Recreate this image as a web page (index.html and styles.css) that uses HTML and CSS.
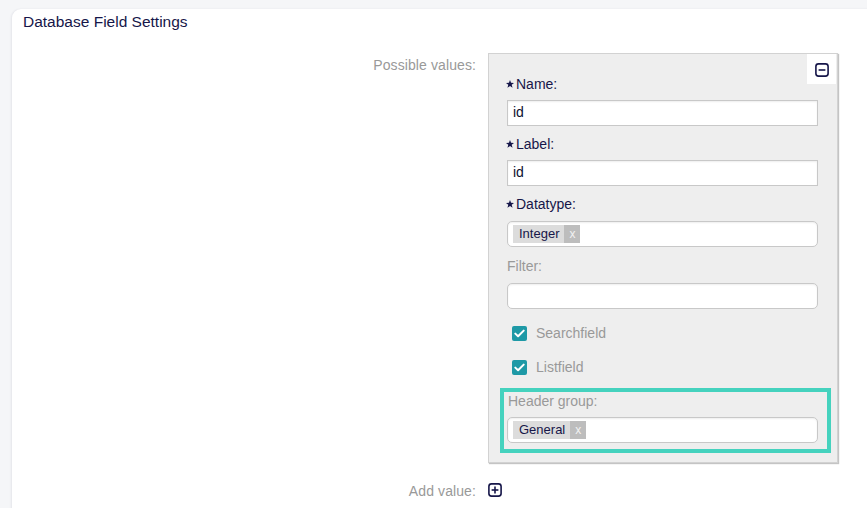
FILE: index.html
```html
<!DOCTYPE html>
<html lang="en">
<head>
<meta charset="utf-8">
<title>Database Field Settings</title>
<link rel="stylesheet" href="styles.css">
</head>
<body>
<div class="card">
  <h1 class="title">Database Field Settings</h1>
  <div class="row">
    <div class="row-label">Possible values:</div>
    <div class="row-value">
      <div class="value-box">
        <button class="collapse" type="button" aria-label="Collapse">
          <svg width="14" height="14" viewBox="0 0 14 14"><rect x="0.9" y="0.9" width="12.2" height="12.2" rx="2.6" fill="none" stroke="#161649" stroke-width="1.6"/><line x1="3.6" y1="7" x2="10.4" y2="7" stroke="#161649" stroke-width="1.6"/></svg>
        </button>
        <div class="field">
          <div class="field-label required"><svg class="star" width="8" height="8" viewBox="0 0 10 10"><polygon points="5,0 6.3,3.5 10,3.6 7.1,5.9 8.2,9.7 5,7.5 1.8,9.7 2.9,5.9 0,3.6 3.7,3.5" fill="#161649"/></svg>Name:</div>
          <div class="input">id</div>
        </div>
        <div class="field">
          <div class="field-label required"><svg class="star" width="8" height="8" viewBox="0 0 10 10"><polygon points="5,0 6.3,3.5 10,3.6 7.1,5.9 8.2,9.7 5,7.5 1.8,9.7 2.9,5.9 0,3.6 3.7,3.5" fill="#161649"/></svg>Label:</div>
          <div class="input">id</div>
        </div>
        <div class="field field-select">
          <div class="field-label required"><svg class="star" width="8" height="8" viewBox="0 0 10 10"><polygon points="5,0 6.3,3.5 10,3.6 7.1,5.9 8.2,9.7 5,7.5 1.8,9.7 2.9,5.9 0,3.6 3.7,3.5" fill="#161649"/></svg>Datatype:</div>
          <div class="input rounded"><span class="tag"><span class="tag-text">Integer</span><span class="tag-x">x</span></span></div>
        </div>
        <div class="field field-select">
          <div class="field-label muted">Filter:</div>
          <div class="input rounded"></div>
        </div>
        <div class="check-row">
          <span class="checkbox"><svg width="11" height="9" viewBox="0 0 11 9"><path d="M1.3 4.6 L4.1 7.3 L9.7 1.6" fill="none" stroke="#fff" stroke-width="2" stroke-linecap="round" stroke-linejoin="round"/></svg></span>
          <span class="check-label">Searchfield</span>
        </div>
        <div class="check-row">
          <span class="checkbox"><svg width="11" height="9" viewBox="0 0 11 9"><path d="M1.3 4.6 L4.1 7.3 L9.7 1.6" fill="none" stroke="#fff" stroke-width="2" stroke-linecap="round" stroke-linejoin="round"/></svg></span>
          <span class="check-label">Listfield</span>
        </div>
        <div class="highlight">
          <div class="field-label muted">Header group:</div>
          <div class="input rounded"><span class="tag"><span class="tag-text">General</span><span class="tag-x">x</span></span></div>
        </div>
      </div>
    </div>
  </div>
  <div class="row add-row">
    <div class="row-label">Add value:</div>
    <div class="row-value">
      <button class="add" type="button" aria-label="Add value">
        <svg width="14" height="14" viewBox="0 0 14 14"><rect x="0.9" y="0.9" width="12.2" height="12.2" rx="2.6" fill="none" stroke="#161649" stroke-width="1.6"/><line x1="3.6" y1="7" x2="10.4" y2="7" stroke="#161649" stroke-width="1.6"/><line x1="7" y1="3.6" x2="7" y2="10.4" stroke="#161649" stroke-width="1.6"/></svg>
      </button>
    </div>
  </div>
</div>
</body>
</html>
```

FILE: styles.css
```css
html, body {
  margin: 0;
  padding: 0;
  overflow: hidden;
}
body {
  background: #f5f6f8;
  font-family: "Liberation Sans", Arial, sans-serif;
  font-size: 14px;
  color: #161649;
  width: 867px;
  height: 508px;
}
.card {
  margin: 9px -20px 0 12px;
  background: #fff;
  border-radius: 9px 9px 0 0;
  box-shadow: -1px 0 2px rgba(40, 40, 80, 0.08);
  min-height: 600px;
  padding-top: 3px;
}
.title {
  margin: 0;
  padding: 0 11px;
  font-size: 15.5px;
  font-weight: normal;
  line-height: 20px;
  color: #161649;
}
.row {
  display: grid;
  grid-template-columns: 464px 350px;
  column-gap: 12px;
  margin-top: 21px;
}
.row-label {
  text-align: right;
  color: #999;
  line-height: 20px;
  padding-top: 2px;
  letter-spacing: 0.1px;
}
.value-box {
  position: relative;
  background: #eeeeee;
  border: 1px solid #d2d2d2;
  box-shadow: 1px 1px 1px #c4c4c4;
  padding: 20px 19px 9px 18px;
}
.collapse {
  position: absolute;
  top: 0;
  right: 1px;
  width: 29px;
  height: 30px;
  background: #fff;
  border: 0;
  padding: 0;
  display: flex;
  align-items: center;
  justify-content: center;
}
.collapse svg {
  margin-top: 1px;
}
.field-label {
  display: flex;
  align-items: center;
  line-height: 20px;
  height: 20px;
  margin-bottom: 6px;
}
.field-label .star {
  margin: 0 2px 0 -1px;
}
.field-label.muted {
  color: #999;
}
.input {
  box-sizing: border-box;
  height: 26px;
  background: #fff;
  border: 1px solid #c8c8c8;
  box-shadow: inset 0 1px 2px rgba(0, 0, 0, 0.07);
  padding: 0 5px 2px;
  line-height: 22px;
  color: #0d1030;
  display: flex;
  align-items: center;
}
.field {
  margin-bottom: 8px;
}
.field-select .field-label {
  margin-bottom: 7px;
}
.field-select {
  margin-bottom: 9px;
}
.input.rounded {
  border-radius: 5px;
  padding-bottom: 0;
}
.tag {
  display: inline-flex;
  height: 18px;
  font-size: 13px;
  line-height: 18px;
}
.tag-text {
  background: #dcdcdc;
  padding: 0 5px 0 6px;
  color: #161649;
}
.tag-x {
  background: #bdbdbd;
  color: #f2f2f2;
  width: 16px;
  text-align: center;
  font-size: 12px;
}
.check-row {
  display: flex;
  align-items: center;
  height: 20px;
  padding-left: 5px;
  margin-top: 14px;
}
.checkbox {
  width: 15px;
  height: 15px;
  border-radius: 2px;
  background: #1e99a6;
  display: flex;
  align-items: center;
  justify-content: center;
  margin-right: 9px;
}
.check-label {
  color: #999;
  line-height: 20px;
}
.highlight {
  margin: 11px -13px 0 -7px;
  border: 4px solid #45d2be;
  padding: 0 9px 6px 3px;
}
.highlight .field-label {
  margin-top: -1px;
  padding-left: 1px;
}
.add-row {
  margin-top: 16px;
}
.add {
  background: none;
  border: 0;
  padding: 0;
  margin-top: 4px;
  display: block;
}
```
